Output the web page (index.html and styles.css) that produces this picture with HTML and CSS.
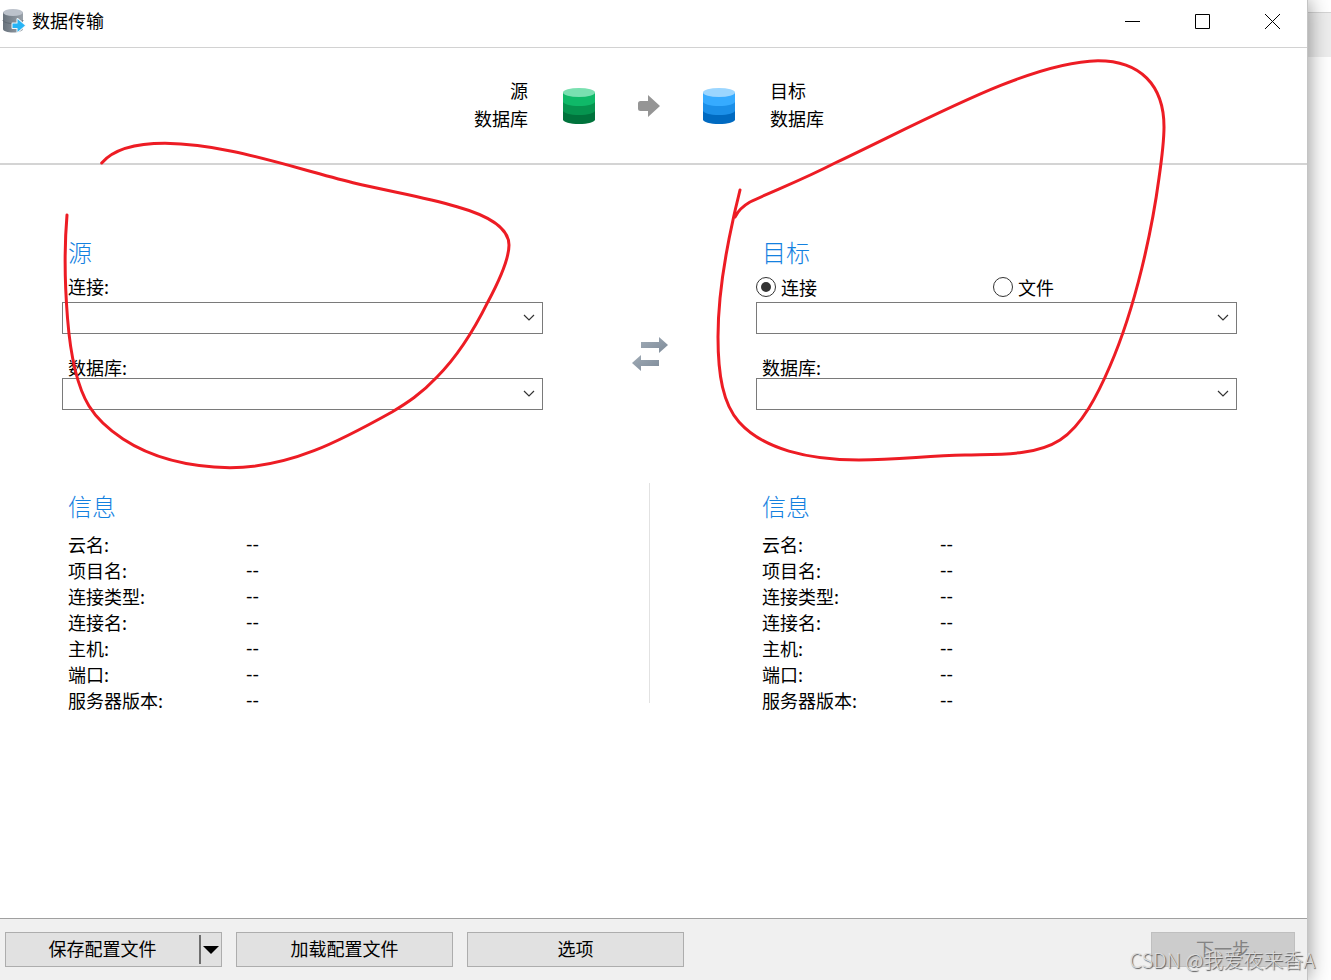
FILE: index.html
```html
<!DOCTYPE html>
<html lang="zh-CN">
<head>
<meta charset="utf-8">
<title>数据传输</title>
<link rel="stylesheet" href="styles.css">
</head>
<body>
<div class="desktop">
  <div class="window">
    <header class="titlebar">
      <svg class="app-icon" width="24" height="26" viewBox="0 0 24 26" aria-hidden="true">
        <defs>
          <linearGradient id="steel" x1="0" x2="1" y1="0" y2="0">
            <stop offset="0" stop-color="#68727c"/><stop offset="1" stop-color="#9aa2aa"/>
          </linearGradient>
        </defs>
        <path d="M1 4v17c0 2 4.500 3.500 10 3.500s10-1.500 10-3.500V4z" fill="url(#steel)"/>
        <path d="M1 12c0 2 4.500 3.500 10 3.500s10-1.500 10-3.500" fill="none" stroke="#5f6973" stroke-width="1"/>
        <ellipse cx="11" cy="4.500" rx="10" ry="3.500" fill="#bcc2cb"/>
        <path d="M10.500 15.500h5v-4.500l7.500 6.500-7.500 6.500v-4h-5z" fill="#27b4f5" stroke="#f4f8fb" stroke-width="2" stroke-linejoin="round" paint-order="stroke"/>
      </svg>
      <h1 class="title">数据传输</h1>
      <div class="controls">
        <button class="control" type="button" aria-label="最小化"><svg width="17" height="17" viewBox="0 0 17 17"><path d="M1 8.500h15" stroke="#000" fill="none"/></svg></button>
        <button class="control" type="button" aria-label="最大化"><svg width="17" height="17" viewBox="0 0 17 17"><path d="M1.500 1.500h14v14h-14z" stroke="#000" fill="none"/></svg></button>
        <button class="control" type="button" aria-label="关闭"><svg width="17" height="17" viewBox="0 0 17 17"><path d="M1 1l15 15M16 1L1 16" stroke="#000" fill="none"/></svg></button>
      </div>
    </header>

    <section class="banner">
      <div class="end end-source">源<br>数据库</div>
      <svg class="db-icon" width="32" height="36" viewBox="0 0 32 36" aria-hidden="true">
        <path d="M0 22v9.500C0 34 7 36 16 36s16-2 16-4.500V22z" fill="#00733c"/>
        <path d="M0 13v9.500C0 25 7 27 16 27s16-2 16-4.500V13z" fill="#06944f"/>
        <path d="M0 4.500v9C0 16 7 18 16 18s16-2 16-4.500v-9z" fill="#0fb968"/>
        <ellipse cx="16" cy="4.500" rx="16" ry="4.500" fill="#79e0b0"/>
      </svg>
      <svg class="arrow" width="22" height="22" viewBox="0 0 22 22" aria-hidden="true">
        <path d="M10 6V0l12 11-12 11v-6H2.500Q0 16 0 13.500v-5Q0 6 2.500 6z" fill="#959595"/>
      </svg>
      <svg class="db-icon" width="32" height="36" viewBox="0 0 32 36" aria-hidden="true">
        <path d="M0 22v9.500C0 34 7 36 16 36s16-2 16-4.500V22z" fill="#006ac1"/>
        <path d="M0 13v9.500C0 25 7 27 16 27s16-2 16-4.500V13z" fill="#1b8fe8"/>
        <path d="M0 4.500v9C0 16 7 18 16 18s16-2 16-4.500v-9z" fill="#36abff"/>
        <ellipse cx="16" cy="4.500" rx="16" ry="4.500" fill="#9bd6ff"/>
      </svg>
      <div class="end">目标<br>数据库</div>
    </section>

    <main class="content">
      <div class="columns">
        <section class="panel">
          <h2 class="heading">源</h2>
          <label class="field-label" for="src-conn">连接:</label>
          <div class="combo">
            <select id="src-conn" class="select"><option></option></select>
            <svg class="chevron" width="12" height="8" viewBox="0 0 12 8"><path d="M1 1l5 5 5-5" fill="none" stroke="#333" stroke-width="1.200"/></svg>
          </div>
          <label class="field-label field-next" for="src-db">数据库:</label>
          <div class="combo">
            <select id="src-db" class="select"><option></option></select>
            <svg class="chevron" width="12" height="8" viewBox="0 0 12 8"><path d="M1 1l5 5 5-5" fill="none" stroke="#333" stroke-width="1.200"/></svg>
          </div>
        </section>

        <button class="swap" type="button" aria-label="交换">
          <svg width="36" height="34" viewBox="0 0 36 34">
            <defs>
              <linearGradient id="slate" x1="0" x2="1" y1="0" y2="1">
                <stop offset="0" stop-color="#a0abb6"/><stop offset="1" stop-color="#7e8b99"/>
              </linearGradient>
            </defs>
            <path d="M9 5h18V0l9 8-9 8v-5H9z" fill="url(#slate)"/>
            <path d="M27 23H9v-5l-9 8 9 8v-5h18z" fill="url(#slate)"/>
          </svg>
        </button>

        <section class="panel">
          <h2 class="heading">目标</h2>
          <div class="radios">
            <label class="radio-label"><input class="radio" type="radio" name="target" checked>连接</label>
            <label class="radio-label"><input class="radio" type="radio" name="target">文件</label>
          </div>
          <div class="combo">
            <select class="select" aria-label="目标连接"><option></option></select>
            <svg class="chevron" width="12" height="8" viewBox="0 0 12 8"><path d="M1 1l5 5 5-5" fill="none" stroke="#333" stroke-width="1.200"/></svg>
          </div>
          <label class="field-label field-next" for="dst-db">数据库:</label>
          <div class="combo">
            <select id="dst-db" class="select"><option></option></select>
            <svg class="chevron" width="12" height="8" viewBox="0 0 12 8"><path d="M1 1l5 5 5-5" fill="none" stroke="#333" stroke-width="1.200"/></svg>
          </div>
        </section>
      </div>

      <div class="columns info">
        <section class="info-panel">
          <h2 class="heading">信息</h2>
          <dl class="facts">
            <dt>云名:</dt><dd>--</dd>
            <dt>项目名:</dt><dd>--</dd>
            <dt>连接类型:</dt><dd>--</dd>
            <dt>连接名:</dt><dd>--</dd>
            <dt>主机:</dt><dd>--</dd>
            <dt>端口:</dt><dd>--</dd>
            <dt>服务器版本:</dt><dd>--</dd>
          </dl>
        </section>
        <div class="divider"></div>
        <section class="info-panel">
          <h2 class="heading">信息</h2>
          <dl class="facts">
            <dt>云名:</dt><dd>--</dd>
            <dt>项目名:</dt><dd>--</dd>
            <dt>连接类型:</dt><dd>--</dd>
            <dt>连接名:</dt><dd>--</dd>
            <dt>主机:</dt><dd>--</dd>
            <dt>端口:</dt><dd>--</dd>
            <dt>服务器版本:</dt><dd>--</dd>
          </dl>
        </section>
      </div>
    </main>

    <footer class="footer">
      <div class="split">
        <button class="split-main" type="button">保存配置文件</button>
        <button class="split-more" type="button" aria-label="更多"><svg width="16" height="8" viewBox="0 0 16 8"><path d="M0 0h16L8 8z" fill="#000"/></svg></button>
      </div>
      <button class="btn" type="button">加载配置文件</button>
      <button class="btn" type="button">选项</button>
      <button class="btn btn-next" type="button" disabled>下一步</button>
    </footer>
  </div>
  <aside class="backdrop"><div class="backdrop-bar"></div></aside>

  <svg class="ink" width="1307" height="480" viewBox="0 0 1307 480" aria-hidden="true">
    <path d="M101.700 163C112 151 132 143.300 165 143.300C225 144 280 164 353 182.700C395 192.500 425 197 457 206.700C490 216 509 228 509 245C509 260 498 283 488 301.700C474 330 456 358 437 377C421 394 407 403 392 412C340 441 290 467.700 230 467.700C190 467 152 458 123 439C108 429 97 419 89 406C75 383 70 350 67.500 318C64.500 280 64 250 67 215"/>
    <path d="M740 190C737 203 735 210 733 220C723 265 718 300 718 337C718 375 723 404 739 422C763 449 808 460 859 460C900 459.500 925 456 965 455C1000 454 1035 456 1060 440C1082 426 1098 394 1110 366C1136 306 1152 230 1159 178C1163 150 1164 138 1164 127C1164 85 1140 60.700 1098 60.700C1030 62 930 118 835 163C800 181 775 190 750 202C743 206 738 211 735 217"/>
  </svg>
  <div class="watermark">CSDN @我爱夜来香A</div>
</div>
</body>
</html>
```
FILE: styles.css
```css
* {
  box-sizing: border-box;
}

body {
  margin: 0;
  background: #fff;
  color: #000;
  font: 400 18px/20px "Noto Sans CJK SC", sans-serif;
}

button,
select {
  font: inherit;
  color: inherit;
}

.desktop {
  position: relative;
  display: flex;
  min-height: 100vh;
  overflow: hidden;
}

.window {
  flex: 1;
  display: flex;
  flex-direction: column;
  background: #fff;
  border-right: 1px solid #c4c4c4;
  box-shadow: 0 0 20px rgba(0, 0, 0, 0.45);
  z-index: 1;
}

.backdrop {
  width: 23px;
  padding-top: 12px;
}

.backdrop-bar {
  height: 45px;
  background: #ededed;
  border-top: 1px solid #d4d4d4;
}

.titlebar {
  display: flex;
  align-items: center;
  height: 48px;
  padding: 0 0 4px 2px;
  border-bottom: 1px solid #d2d2d2;
}

.app-icon {
  margin-bottom: 2px;
}

.title {
  margin: 0 auto 0 6px;
  padding-bottom: 4px;
  font-size: 18px;
  font-weight: 400;
}

.controls {
  display: flex;
}

.control {
  display: grid;
  place-items: center;
  width: 70px;
  height: 43px;
  padding: 0;
  border: 0;
  background: none;
}

.banner {
  display: flex;
  justify-content: center;
  align-items: center;
  height: 117px;
  padding-right: 9px;
  border-bottom: 2px solid #d4d4d4;
}

.end {
  padding-bottom: 4px;
  line-height: 28px;
}

.end-source {
  text-align: right;
}

.db-icon {
  margin: 0 35px;
}

.arrow {
  margin: 0 8px;
}

.content {
  flex: 1;
  padding: 72px 70px 0 62px;
}

.columns {
  display: grid;
  grid-template-columns: 1fr 213px 1fr;
}

.heading {
  margin: 0 0 10px;
  padding-left: 6px;
  font-size: 24px;
  line-height: 30px;
  font-weight: 300;
  color: #1481df;
}

.field-label {
  display: block;
  margin-bottom: 7px;
  padding-left: 6px;
  line-height: 18px;
}

.field-next {
  margin: 24px 0 2px;
}

.combo {
  position: relative;
  height: 32px;
}

.select {
  appearance: none;
  width: 100%;
  height: 32px;
  border: 1px solid #7a7a7a;
  border-radius: 0;
  background: #fff;
}

.chevron {
  position: absolute;
  right: 8px;
  top: 12px;
  pointer-events: none;
}

.radios {
  display: grid;
  grid-template-columns: 237px 1fr;
  margin-bottom: 5px;
}

.radio-label {
  display: flex;
  align-items: center;
  gap: 5px;
}

.radio {
  appearance: none;
  display: grid;
  place-items: center;
  width: 20px;
  height: 20px;
  margin: 0;
  border: 1px solid #333;
  border-radius: 50%;
}

.radio:checked::before {
  content: "";
  width: 10px;
  height: 10px;
  border-radius: 50%;
  background: #333;
}

.swap {
  place-self: end center;
  display: block;
  margin-bottom: 39px;
  padding: 0;
  border: 0;
  background: none;
}

.swap svg {
  display: block;
}

.info {
  margin-top: 73px;
}

.info-panel {
  padding-top: 8px;
}

.divider {
  justify-self: center;
  width: 1px;
  height: 220px;
  background: #e2e2e2;
}

.facts {
  display: grid;
  grid-template-columns: 178px 1fr;
  margin: 0;
  padding-left: 6px;
  line-height: 26px;
}

.facts dd {
  margin: 0;
  font-family: "DejaVu Sans", sans-serif;
}

.footer {
  display: flex;
  gap: 14px;
  height: 62px;
  padding: 13px 12px 0 5px;
  border-top: 1px solid #a0a0a0;
  background: #f0f0f0;
}

.btn,
.split {
  width: 217px;
  height: 35px;
  padding: 0 0 3px;
  border: 1px solid #adadad;
  background: #e1e1e1;
}

.split {
  display: flex;
  align-items: center;
  padding: 0;
}

.split-main {
  flex: 1;
  height: 33px;
  padding: 0 0 3px;
  border: 0;
  background: none;
}

.split-more {
  display: grid;
  place-items: center;
  width: 22px;
  height: 29px;
  padding: 0;
  border: 0;
  border-left: 2px solid #6e6e6e;
  background: none;
}

.btn-next {
  width: 144px;
  margin-left: auto;
  border-color: #bfbfbf;
  background: #ccc;
  color: #838383;
}

.ink {
  position: absolute;
  left: 0;
  top: 0;
  z-index: 2;
  fill: none;
  stroke: #ed1c24;
  stroke-width: 3;
  stroke-linecap: round;
  stroke-linejoin: round;
  pointer-events: none;
}

.watermark {
  position: absolute;
  right: 16px;
  bottom: 8px;
  z-index: 3;
  font-size: 20px;
  font-weight: 300;
  line-height: 24px;
  color: #dcdcdc;
  text-shadow: 1px 1px 1px #555;
  pointer-events: none;
}
```
